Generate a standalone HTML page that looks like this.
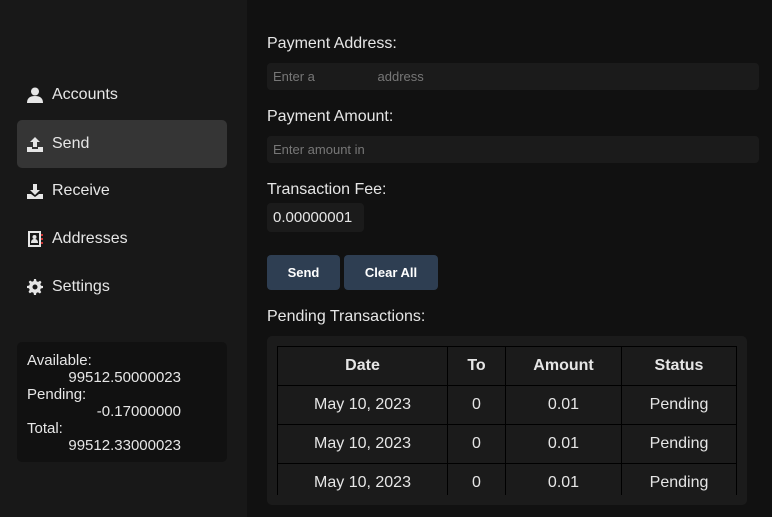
<!DOCTYPE html>
<html><head><style>
*{margin:0;padding:0;box-sizing:border-box}
body{width:772px;height:517px;background:#111;font-family:"Liberation Sans",sans-serif;color:#e6e6e6;position:relative;overflow:hidden}
.side{position:absolute;left:0;top:0;width:247px;height:517px;background:#181818}
.nav{position:absolute;left:17px;width:210px;height:48px;border-radius:5px;font-size:16px;display:flex;align-items:center;padding-left:10px}
.nav svg{width:16px;height:16px;margin-right:9px;fill:#e6e6e6}
.nav.act{background:#353535}
.bal{position:absolute;left:17px;top:342px;width:210px;height:120px;background:#111;border-radius:5px;font-size:15px;line-height:17px;padding:10px 0 0 10px}
.bal .v{width:154px;text-align:right}
.lbl{position:absolute;left:267px;font-size:16px}
.inp{position:absolute;left:267px;width:492px;height:27px;background:#1b1b1b;border-radius:4px;font-size:13px;color:#777;padding:6px 0 0 6px}
.fee{position:absolute;left:267px;top:203px;width:97px;height:29px;background:#1b1b1b;border-radius:4px;font-size:15px;padding:6px 0 0 6px}
.btn{position:absolute;top:255px;height:35px;background:#2e3e52;border-radius:4px;font-weight:bold;font-size:13px;color:#fff;text-align:center;line-height:35px}
.tw{position:absolute;left:267px;top:336px;width:480px;height:169px;background:#1b1b1b;border-radius:5px}
.clip{position:absolute;left:10px;top:10px;width:461px;height:149px;overflow:hidden}
table{border-collapse:collapse;width:460px}
td,th{border:1px solid #000;height:39px;text-align:center;font-size:16px;font-weight:normal}
th{font-weight:bold}
</style></head><body>
<div class="side">
<div class="nav" style="top:71px"><svg viewBox="0 0 16 16"><circle cx="8" cy="4.5" r="4"/><path d="M0 16c0-5 3-7 8-7s8 2 8 7z"/></svg>Accounts</div>
<div class="nav act" style="top:120px"><svg viewBox="0 0 16 16"><path d="M8 1l5 5h-3v5H6V6H3z"/><path d="M0 11h5v2h6v-2h5v5H0z"/></svg>Send</div>
<div class="nav" style="top:167px"><svg viewBox="0 0 16 16"><path d="M6 1h4v6h3l-5 5-5-5h3z"/><path d="M0 11h4l4 3 4-3h4v5H0z"/></svg>Receive</div>
<div class="nav" style="top:215px"><svg viewBox="0 0 16 16"><path d="M1 0h13v16H1zM3 2v12h9V2z"/><circle cx="7.5" cy="6" r="2"/><path d="M4 12c0-3 1.5-4 3.5-4s3.5 1 3.5 4z"/><path d="M14 3h2v2h-2zM14 7h2v2h-2zM14 11h2v2h-2z" fill="#c33"/></svg>Addresses</div>
<div class="nav" style="top:263px"><svg viewBox="0 0 16 16"><path d="M7 0h2l.5 2.2 1.6.7 2-1.2 1.4 1.4-1.2 2 .7 1.6L16 7v2l-2.2.5-.7 1.6 1.2 2-1.4 1.4-2-1.2-1.6.7L9 16H7l-.5-2.2-1.6-.7-2 1.2-1.4-1.4 1.2-2-.7-1.6L0 9V7l2.2-.5.7-1.6-1.2-2 1.4-1.4 2 1.2 1.6-.7zM8 5.5a2.5 2.5 0 100 5 2.5 2.5 0 000-5z"/></svg>Settings</div>
<div class="bal">Available:<div class="v">99512.50000023</div>Pending:<div class="v">-0.17000000</div>Total:<div class="v">99512.33000023</div></div>
</div>
<div class="lbl" style="top:35px">Payment Address:</div>
<div class="inp" style="top:63px">Enter a <span style="margin-left:59px">address</span></div>
<div class="lbl" style="top:108px">Payment Amount:</div>
<div class="inp" style="top:136px">Enter amount in</div>
<div class="lbl" style="top:181px">Transaction Fee:</div>
<div class="fee">0.00000001</div>
<div class="btn" style="left:267px;width:73px">Send</div>
<div class="btn" style="left:344px;width:94px">Clear All</div>
<div class="lbl" style="top:308px">Pending Transactions:</div>
<div class="tw"><div class="clip"><table>
<tr><th style="width:170px">Date</th><th style="width:58px">To</th><th style="width:116px">Amount</th><th>Status</th></tr>
<tr><td>May 10, 2023</td><td>0</td><td>0.01</td><td>Pending</td></tr>
<tr><td>May 10, 2023</td><td>0</td><td>0.01</td><td>Pending</td></tr>
<tr><td>May 10, 2023</td><td>0</td><td>0.01</td><td>Pending</td></tr>
</table></div></div>
</body></html>
